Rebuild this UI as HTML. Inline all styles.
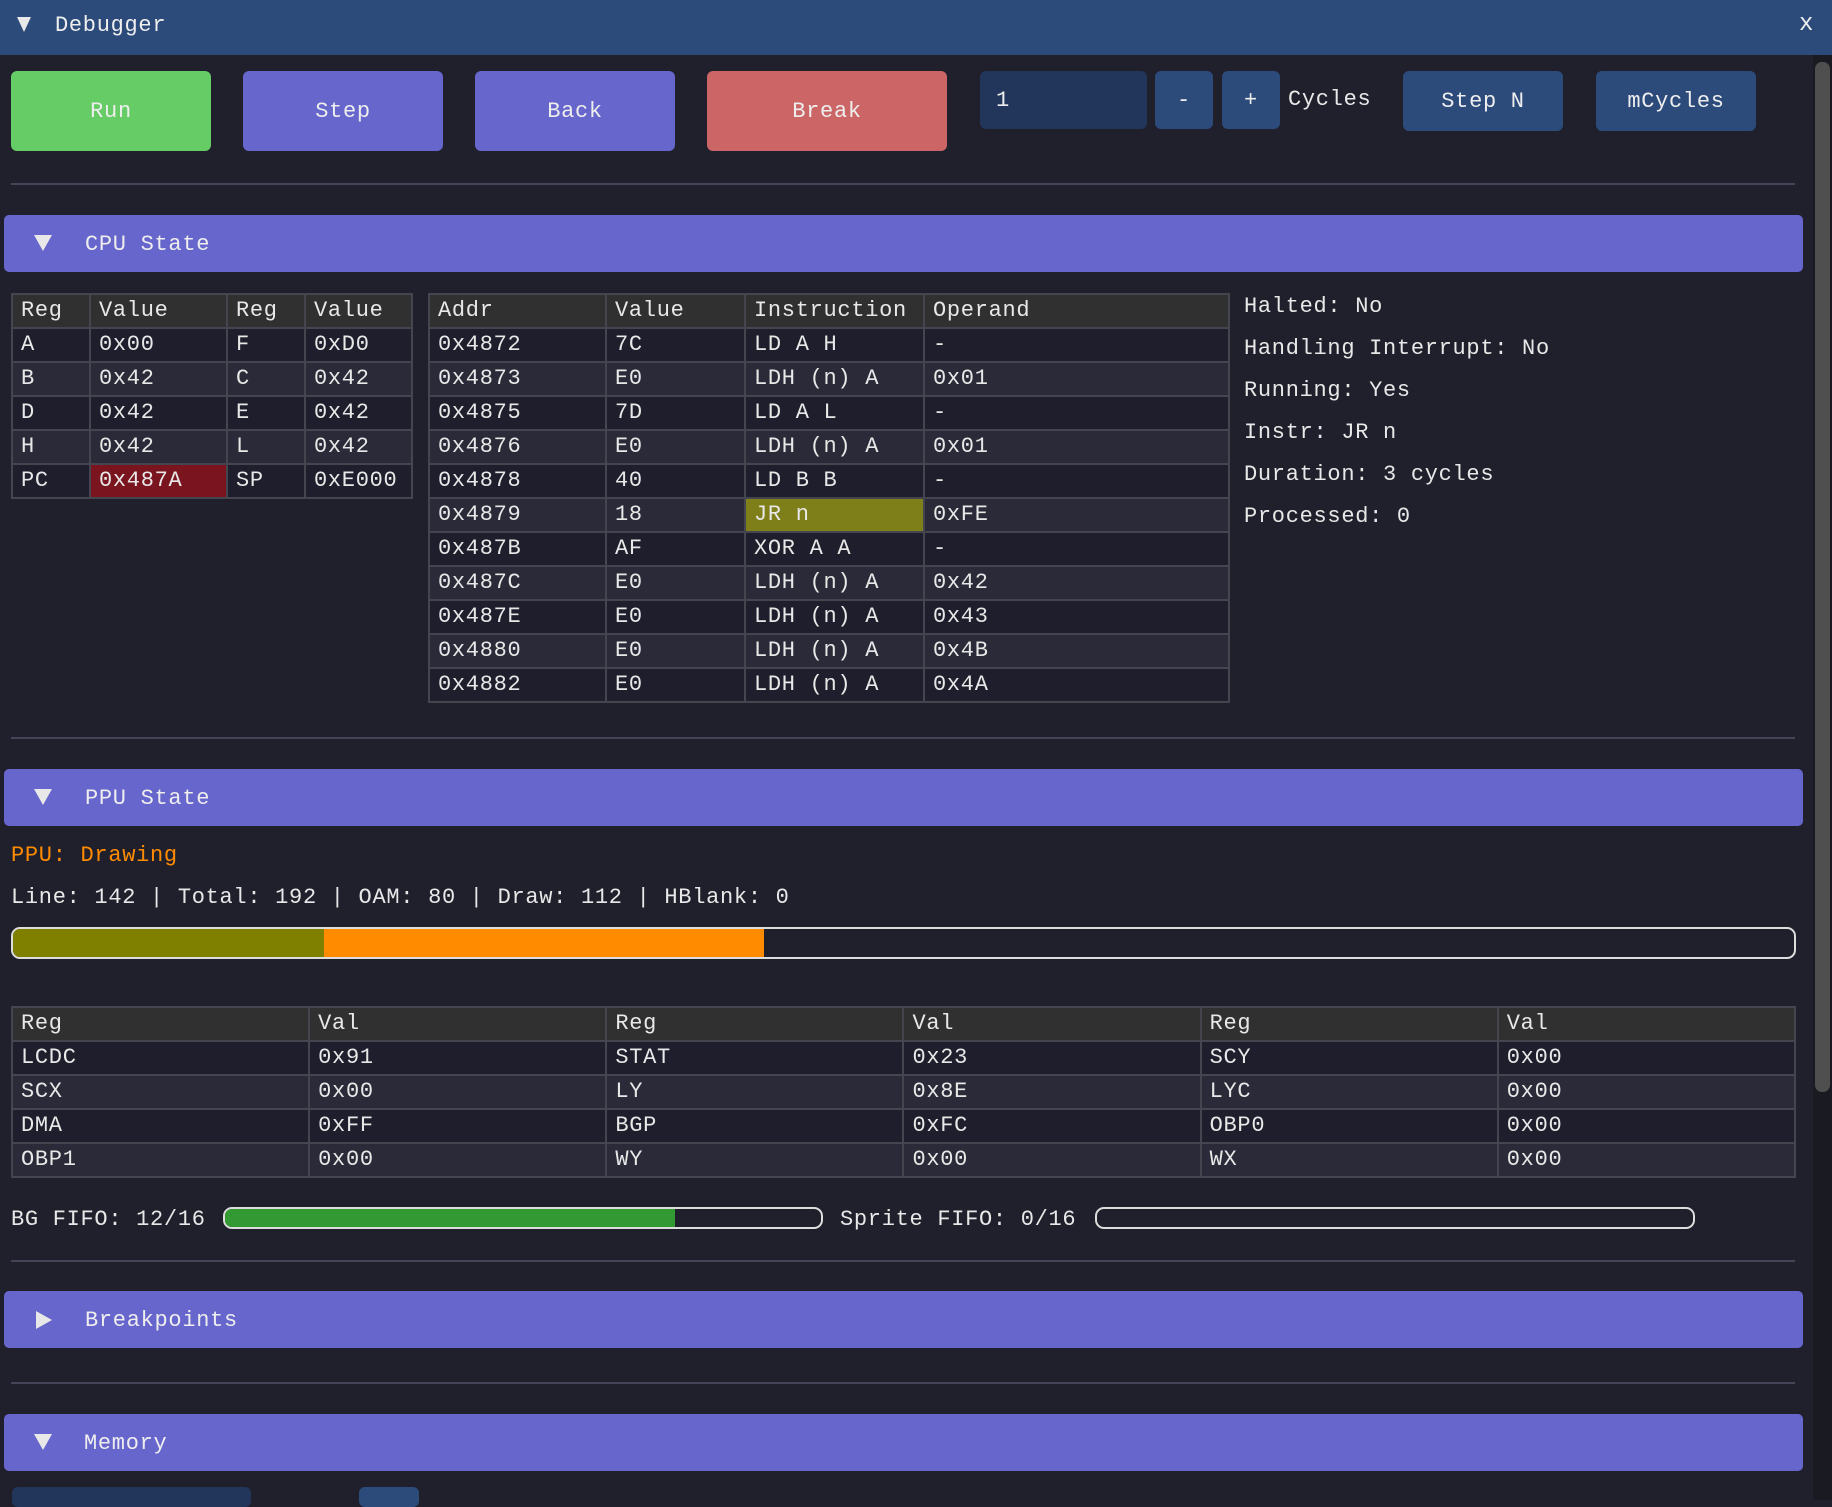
<!DOCTYPE html>
<html><head><meta charset="utf-8"><style>
*{margin:0;padding:0;box-sizing:border-box}
body{width:1832px;height:1500px;background:#20202d;font-family:"Liberation Mono","DejaVu Sans Mono",monospace;font-size:22px;letter-spacing:0.7px;color:#e8e8e8;position:relative;overflow:hidden}
.a{position:absolute}
.btn{position:absolute;border-radius:6px;display:flex;align-items:center;justify-content:center;color:#eee}
.sep{position:absolute;left:11px;width:1784px;height:2px;background:#45455a}
.hdr{position:absolute;left:4px;width:1799px;height:57px;background:#6666cc;border-radius:5px}
.hdr span{position:absolute;left:81px;top:17px;color:#eee}
.td{position:absolute;left:30px;top:20px;border-left:9px solid transparent;border-right:9px solid transparent;border-top:16px solid #e8e8e8}
.tr{position:absolute;left:32px;top:20px;border-top:9px solid transparent;border-bottom:9px solid transparent;border-left:16px solid #e8e8e8}
table{position:absolute;border-collapse:collapse;table-layout:fixed}
td{border:2px solid #45454f;height:34px;padding:0 8px;white-space:nowrap;line-height:30px}
tr:first-child td{background:#303030}
tr.o td{background:#1e1e2c}
tr.e td{background:#2a2a38}
.bar{position:absolute;border:2px solid #ddd;border-radius:9px;overflow:hidden;background:#20202d}
</style></head><body>
<div class="a" style="left:0;top:0;width:1832px;height:55px;background:#2c4b7b"></div>
<div class="a" style="left:17px;top:17px;border-left:7px solid transparent;border-right:7px solid transparent;border-top:15px solid #e8e8e8"></div>
<div class="a" style="left:55px;top:13px;color:#eee">Debugger</div>
<div class="a" style="left:1799px;top:11px;color:#eee;font-size:24px">x</div>
<div class="a" style="left:1813px;top:55px;width:19px;height:1445px;background:#1a1a22"></div>
<div class="a" style="left:1815px;top:62px;width:15px;height:1030px;background:#4f4f4f;border-radius:7px"></div>

<div class="btn" style="left:11px;top:71px;width:200px;height:80px;background:#66cc66">Run</div>
<div class="btn" style="left:243px;top:71px;width:200px;height:80px;background:#6666cc">Step</div>
<div class="btn" style="left:475px;top:71px;width:200px;height:80px;background:#6666cc">Back</div>
<div class="btn" style="left:707px;top:71px;width:240px;height:80px;background:#cc6666">Break</div>
<div class="btn" style="left:980px;top:71px;width:167px;height:58px;background:#22355a;justify-content:flex-start;padding-left:16px">1</div>
<div class="btn" style="left:1155px;top:71px;width:58px;height:58px;background:#2c4b7b">-</div>
<div class="btn" style="left:1222px;top:71px;width:58px;height:58px;background:#2c4b7b">+</div>
<div class="a" style="left:1288px;top:87px">Cycles</div>
<div class="btn" style="left:1403px;top:71px;width:160px;height:60px;background:#2c4b7b">Step N</div>
<div class="btn" style="left:1596px;top:71px;width:160px;height:60px;background:#2c4b7b">mCycles</div>
<div class="sep" style="top:183px"></div>

<div class="hdr" style="top:215px"><div class="td"></div><span>CPU State</span></div>

<table style="left:11px;top:293px;width:400px">
<col style="width:78px"><col style="width:137px"><col style="width:78px"><col style="width:107px">
<tr><td>Reg</td><td>Value</td><td>Reg</td><td>Value</td></tr>
<tr class="o"><td>A</td><td>0x00</td><td>F</td><td>0xD0</td></tr>
<tr class="e"><td>B</td><td>0x42</td><td>C</td><td>0x42</td></tr>
<tr class="o"><td>D</td><td>0x42</td><td>E</td><td>0x42</td></tr>
<tr class="e"><td>H</td><td>0x42</td><td>L</td><td>0x42</td></tr>
<tr class="o"><td>PC</td><td style="background:#7a1520">0x487A</td><td>SP</td><td>0xE000</td></tr>
</table>

<table style="left:428px;top:293px;width:800px">
<col style="width:177px"><col style="width:139px"><col style="width:179px"><col style="width:305px">
<tr><td>Addr</td><td>Value</td><td>Instruction</td><td>Operand</td></tr>
<tr class="o"><td>0x4872</td><td>7C</td><td>LD A H</td><td>-</td></tr>
<tr class="e"><td>0x4873</td><td>E0</td><td>LDH (n) A</td><td>0x01</td></tr>
<tr class="o"><td>0x4875</td><td>7D</td><td>LD A L</td><td>-</td></tr>
<tr class="e"><td>0x4876</td><td>E0</td><td>LDH (n) A</td><td>0x01</td></tr>
<tr class="o"><td>0x4878</td><td>40</td><td>LD B B</td><td>-</td></tr>
<tr class="e"><td>0x4879</td><td>18</td><td style="background:#7f7f1a">JR n</td><td>0xFE</td></tr>
<tr class="o"><td>0x487B</td><td>AF</td><td>XOR A A</td><td>-</td></tr>
<tr class="e"><td>0x487C</td><td>E0</td><td>LDH (n) A</td><td>0x42</td></tr>
<tr class="o"><td>0x487E</td><td>E0</td><td>LDH (n) A</td><td>0x43</td></tr>
<tr class="e"><td>0x4880</td><td>E0</td><td>LDH (n) A</td><td>0x4B</td></tr>
<tr class="o"><td>0x4882</td><td>E0</td><td>LDH (n) A</td><td>0x4A</td></tr>
</table>

<div class="a" style="left:1244px;top:286px;line-height:42px">Halted: No<br>Handling Interrupt: No<br>Running: Yes<br>Instr: JR n<br>Duration: 3 cycles<br>Processed: 0</div>

<div class="sep" style="top:737px"></div>
<div class="hdr" style="top:769px"><div class="td"></div><span>PPU State</span></div>
<div class="a" style="left:11px;top:843px;color:#ff8c00">PPU: Drawing</div>
<div class="a" style="left:11px;top:885px">Line: 142 | Total: 192 | OAM: 80 | Draw: 112 | HBlank: 0</div>
<div class="bar" style="left:11px;top:927px;width:1785px;height:32px">
<div class="a" style="left:0;top:0;width:311px;height:30px;background:#808000"></div>
<div class="a" style="left:311px;top:0;width:440px;height:30px;background:#ff8c00"></div>
</div>

<table style="left:11px;top:1006px;width:1785px">
<col><col><col><col><col><col>
<tr><td>Reg</td><td>Val</td><td>Reg</td><td>Val</td><td>Reg</td><td>Val</td></tr>
<tr class="o"><td>LCDC</td><td>0x91</td><td>STAT</td><td>0x23</td><td>SCY</td><td>0x00</td></tr>
<tr class="e"><td>SCX</td><td>0x00</td><td>LY</td><td>0x8E</td><td>LYC</td><td>0x00</td></tr>
<tr class="o"><td>DMA</td><td>0xFF</td><td>BGP</td><td>0xFC</td><td>OBP0</td><td>0x00</td></tr>
<tr class="e"><td>OBP1</td><td>0x00</td><td>WY</td><td>0x00</td><td>WX</td><td>0x00</td></tr>
</table>

<div class="a" style="left:11px;top:1207px">BG FIFO: 12/16</div>
<div class="bar" style="left:223px;top:1207px;width:600px;height:22px"><div class="a" style="left:0;top:0;width:450px;height:18px;background:#339933"></div></div>
<div class="a" style="left:840px;top:1207px">Sprite FIFO: 0/16</div>
<div class="bar" style="left:1095px;top:1207px;width:600px;height:22px"></div>

<div class="sep" style="top:1260px"></div>
<div class="hdr" style="top:1291px"><div class="tr"></div><span>Breakpoints</span></div>
<div class="sep" style="top:1382px"></div>
<div class="hdr" style="top:1414px"><div class="td"></div><span style="left:80px">Memory</span></div>
<div class="a" style="left:12px;top:1487px;width:239px;height:20px;background:#22355a;border-radius:6px"></div>
<div class="a" style="left:359px;top:1487px;width:60px;height:20px;background:#2c4b7b;border-radius:6px"></div>
</body></html>
